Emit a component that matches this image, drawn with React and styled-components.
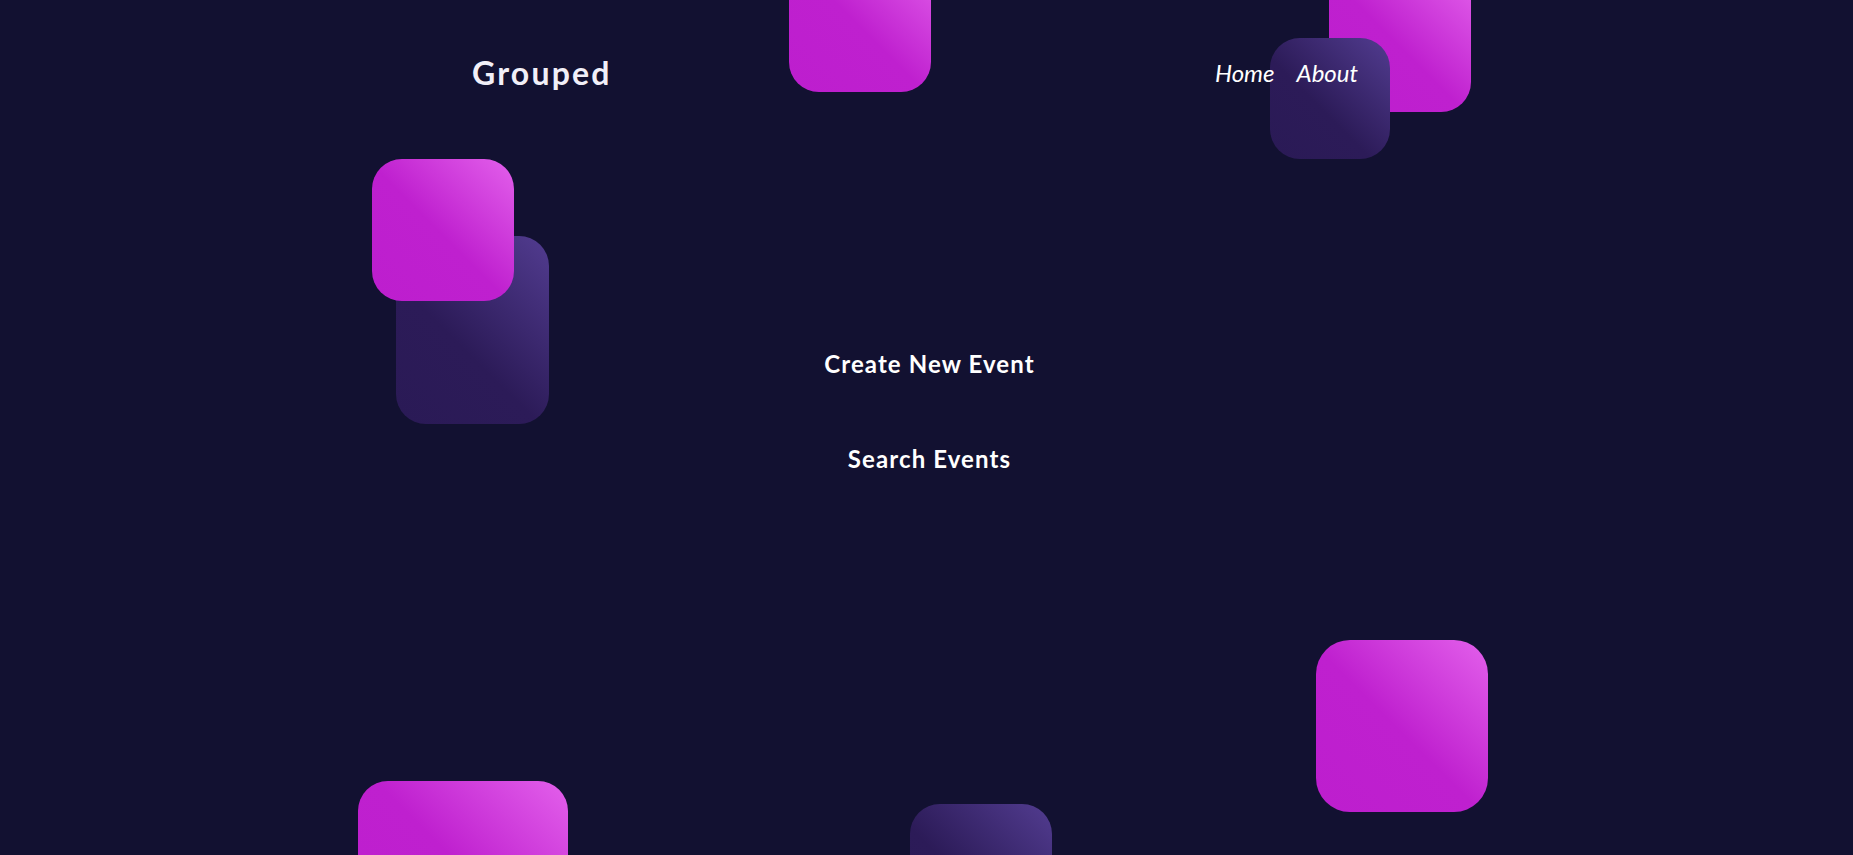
import React from 'react';
import styled, { createGlobalStyle, css } from 'styled-components';

const GlobalStyle = createGlobalStyle`
    html, body {
        margin: 0;
        padding: 0;
        background: #121131;
        font-family: "Lato", "Noto Sans", sans-serif;
        color: #ffffff;
    }
`;

const Page = styled.div`
    position: relative;
    height: 855px;
    overflow: hidden;
    background: #121131;
`;

const pink = css`
    background: linear-gradient(45deg, #bd1ece 0%, #bf20cf 48%, #e360eb 100%);
`;

const dark = css`
    background: linear-gradient(45deg, #2a1a56 0%, #2c1b58 42%, #523c90 100%);
`;

// floating blocks in the background, their place is the decoration itself
const Block = styled.div`
    position: absolute;
    border-radius: ${p => p.$r || 30}px;
    ${p => (p.$dark ? dark : pink)}
`;

const Content = styled.div`
    position: relative;
    z-index: 2;
`;

const Header = styled.header`
    height: 146px;
    display: flex;
    align-items: center;
    justify-content: space-between;
    padding: 0 495px 0 472px;
`;

const Logo = styled.div`
    font-size: 32px;
    font-weight: 700;
    line-height: 1.2;
    color: #f1eff8;
    letter-spacing: 2.2px;
`;

const Nav = styled.nav`
    display: flex;
    gap: 22px;
`;

const NavLink = styled.a`
    font-size: 24px;
    font-style: italic;
    font-weight: 400;
    line-height: 1.2;
    color: #ffffff;
    cursor: pointer;
`;

const Actions = styled.main`
    margin-top: 203px;
    padding-left: 6px;
    display: flex;
    flex-direction: column;
    align-items: center;
    gap: 66px;
`;

const Action = styled.a`
    font-size: 24px;
    font-weight: 700;
    line-height: 29px;
    color: #ffffff;
    letter-spacing: 1.1px;
    cursor: pointer;
`;

const blocks = [
    { left: 789, top: -50, w: 142, h: 142 },
    { left: 1329, top: -30, w: 142, h: 142 },
    { left: 1270, top: 38, w: 120, h: 121, dark: true },
    { left: 396, top: 236, w: 153, h: 188, dark: true },
    { left: 372, top: 159, w: 142, h: 142 },
    { left: 1316, top: 640, w: 172, h: 172, r: 34 },
    { left: 358, top: 781, w: 210, h: 160 },
    { left: 910, top: 804, w: 142, h: 142, dark: true },
];

const App = () => {
    return (
        <Page>
            <GlobalStyle />
            {blocks.map((b, i) => (
                <Block
                    key={i}
                    $dark={b.dark}
                    $r={b.r}
                    style={{ left: b.left, top: b.top, width: b.w, height: b.h }}
                />
            ))}
            <Content>
                <Header>
                    <Logo>Grouped</Logo>
                    <Nav>
                        <NavLink>Home</NavLink>
                        <NavLink>About</NavLink>
                    </Nav>
                </Header>
                <Actions>
                    <Action>Create New Event</Action>
                    <Action>Search Events</Action>
                </Actions>
            </Content>
        </Page>
    );
};

export default App;
